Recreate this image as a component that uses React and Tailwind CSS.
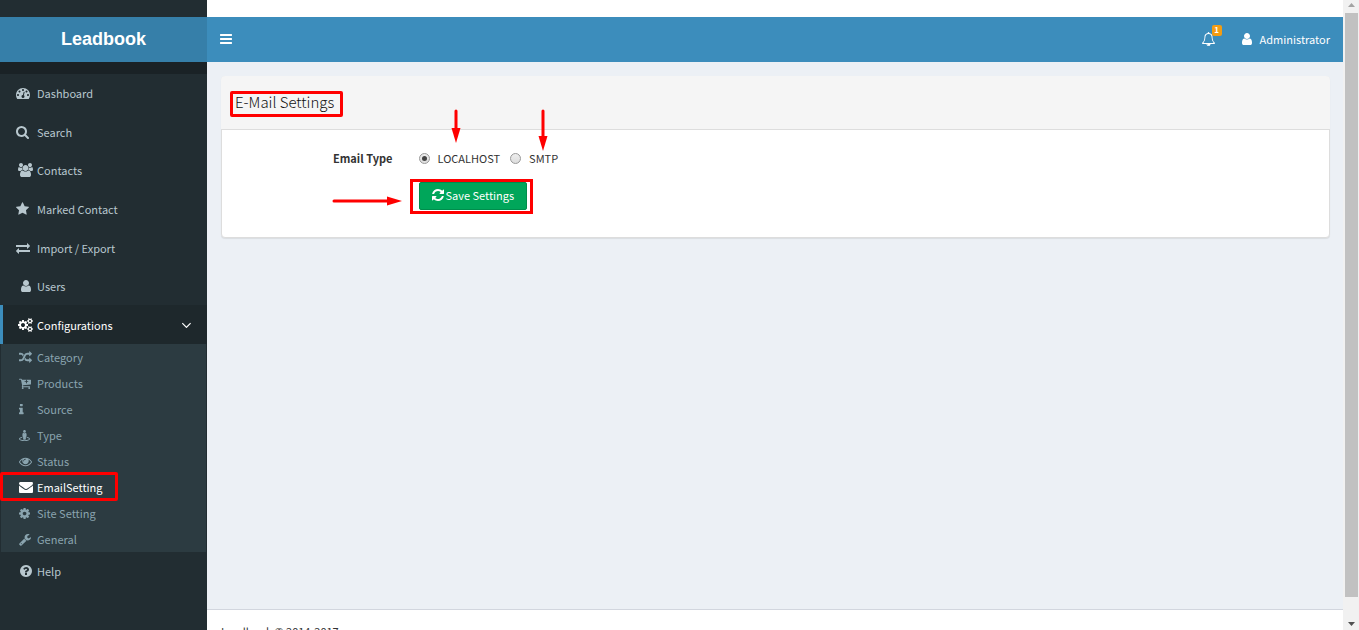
import { useState } from 'react'
import { FaStreetView } from 'react-icons/fa'

// Each icon: [viewBox x, viewBox width, path]. Height is always 1792 units.
const ICONS = {
  bars: [128, 1536, 'M1664 1344v128q0 26-19 45t-45 19h-1408q-26 0-45-19t-19-45v-128q0-26 19-45t45-19h1408q26 0 45 19t19 45zm0-512v128q0 26-19 45t-45 19h-1408q-26 0-45-19t-19-45v-128q0-26 19-45t45-19h1408q26 0 45 19t19 45zm0-512v128q0 26-19 45t-45 19h-1408q-26 0-45-19t-19-45v-128q0-26 19-45t45-19h1408q26 0 45 19t19 45z'],
  dashboard: [0, 1792, 'M384 1152q0-53-37.5-90.5t-90.5-37.5-90.5 37.5-37.5 90.5 37.5 90.5 90.5 37.5 90.5-37.5 37.5-90.5zm192-448q0-53-37.5-90.5t-90.5-37.5-90.5 37.5-37.5 90.5 37.5 90.5 90.5 37.5 90.5-37.5 37.5-90.5zm428 481l101-382q6-26-7.5-48.5t-38.5-29.5-48 6.5-30 39.5l-101 382q-60 5-107 43.5t-63 98.5q-20 77 20 146t117 89 146-20 89-117q16-60-6-117t-72-91zm660-33q0-53-37.5-90.5t-90.5-37.5-90.5 37.5-37.5 90.5 37.5 90.5 90.5 37.5 90.5-37.5 37.5-90.5zm-640-640q0-53-37.5-90.5t-90.5-37.5-90.5 37.5-37.5 90.5 37.5 90.5 90.5 37.5 90.5-37.5 37.5-90.5zm448 192q0-53-37.5-90.5t-90.5-37.5-90.5 37.5-37.5 90.5 37.5 90.5 90.5 37.5 90.5-37.5 37.5-90.5zm320 448q0 261-141 483-19 29-54 29h-1402q-35 0-54-29-141-221-141-483 0-182 71-348t191-286 286-191 348-71 348 71 286 191 191 286 71 348z'],
  search: [64, 1664, 'M1216 832q0-185-131.5-316.5t-316.5-131.5-316.5 131.5-131.5 316.5 131.5 316.5 316.5 131.5 316.5-131.5 131.5-316.5zm512 832q0 52-38 90t-90 38q-54 0-90-38l-343-342q-179 124-399 124-143 0-273.5-55.5t-225-150-150-225-55.5-273.5 55.5-273.5 150-225 225-150 273.5-55.5 273.5 55.5 225 150 150 225 55.5 273.5q0 220-124 399l343 343q37 37 37 90z'],
  users: [0, 1920, 'M593 896q-162 5-265 128h-134q-82 0-138-40.5t-56-118.5q0-353 124-353 6 0 43.5 21t97.5 42.5 119 21.5q67 0 133-23-5 37-5 66 0 139 81 256zm1071 637q0 120-73 189.5t-194 69.5h-874q-121 0-194-69.5t-73-189.5q0-53 3.5-103.5t14-109 26.5-108.5 43-97.5 62-81 85.5-53.5 111.5-20q10 0 43 21.5t73 48 107 48 135 21.5 135-21.5 107-48 73-48 43-21.5q61 0 111.5 20t85.5 53.5 62 81 43 97.5 26.5 108.5 14 109 3.5 103.5zm-1024-1277q0 106-75 181t-181 75-181-75-75-181 75-181 181-75 181 75 75 181zm704 384q0 159-112.5 271.5t-271.5 112.5-271.5-112.5-112.5-271.5 112.5-271.5 271.5-112.5 271.5 112.5 112.5 271.5zm576 225q0 78-56 118.5t-138 40.5h-134q-103-123-265-128 81-117 81-256 0-29-5-66 66 23 133 23 59 0 119-21.5t97.5-42.5 43.5-21q124 0 124 353zm-128-609q0 106-75 181t-181 75-181-75-75-181 75-181 181-75 181 75 75 181z'],
  star: [64, 1664, 'M1728 647q0 22-26 48l-363 354 86 500q1 7 1 20 0 21-10.5 35.5t-30.5 14.5q-19 0-40-12l-449-236-449 236q-22 12-40 12-21 0-31.5-14.5t-10.5-35.5q0-6 2-20l86-500-364-354q-25-27-25-48 0-37 56-46l502-73 225-455q19-41 49-41t49 41l225 455 502 73q56 9 56 46z'],
  exchange: [0, 1792, 'M1792 1184v192q0 13-9.5 22.5t-22.5 9.5h-1376v192q0 13-9.5 22.5t-22.5 9.5q-12 0-24-10l-319-320q-9-9-9-22 0-14 9-23l320-320q9-9 23-9 13 0 22.5 9.5t9.5 22.5v192h1376q13 0 22.5 9.5t9.5 22.5zm0-544q0 14-9 23l-320 320q-9 9-23 9-13 0-22.5-9.5t-9.5-22.5v-192h-1376q-13 0-22.5-9.5t-9.5-22.5v-192q0-13 9.5-22.5t22.5-9.5h1376v-192q0-14 9-23t23-9q12 0 24 10l319 319q9 9 9 23z'],
  user: [256, 1280, 'M1536 1399q0 109-62.5 187t-150.5 78h-854q-88 0-150.5-78t-62.5-187q0-85 8.5-160.5t31.5-152 58.5-131 94-89 134.5-34.5q131 128 313 128t313-128q76 0 134.5 34.5t94 89 58.5 131 31.5 152 8.5 160.5zm-256-887q0 159-112.5 271.5t-271.5 112.5-271.5-112.5-112.5-271.5 112.5-271.5 271.5-112.5 271.5 112.5 112.5 271.5z'],
  cogs: [0, 1920, 'M896 896q0-106-75-181t-181-75-181 75-75 181 75 181 181 75 181-75 75-181zm768 512q0-52-38-90t-90-38-90 38-38 90q0 53 37.5 90.5t90.5 37.5 90.5-37.5 37.5-90.5zm0-1024q0-52-38-90t-90-38-90 38-38 90q0 53 37.5 90.5t90.5 37.5 90.5-37.5 37.5-90.5zm-384 421v185q0 10-7 19.5t-16 10.5l-155 24q-11 35-32 76 34 48 90 115 7 11 7 20 0 12-7 19-23 30-82.5 89.5t-78.5 59.5q-11 0-21-7l-115-90q-37 19-77 31-11 108-23 155-7 24-30 24h-186q-11 0-20-7.5t-10-17.5l-23-153q-34-10-75-31l-118 89q-7 7-20 7-11 0-21-8-144-133-144-160 0-9 7-19 10-14 41-53t47-61q-23-44-35-82l-152-24q-10-1-17-9.5t-7-19.5v-185q0-10 7-19.5t16-10.5l155-24q11-35 32-76-34-48-90-115-7-11-7-20 0-12 7-20 22-30 82-89t79-59q11 0 21 7l115 90q34-18 77-32 11-108 23-154 7-24 30-24h186q11 0 20 7.5t10 17.5l23 153q34 10 75 31l118-89q8-7 20-7 11 0 21 8 144 133 144 160 0 8-7 19-12 16-42 54t-45 60q23 48 34 82l152 23q10 2 17 10.5t7 19.5zm640 533v140q0 16-149 31-12 27-30 52 51 113 51 138 0 4-4 7-122 71-124 71-8 0-46-47t-52-68q-20 2-30 2t-30-2q-14 21-52 68t-46 47q-2 0-124-71-4-3-4-7 0-25 51-138-18-25-30-52-149-15-149-31v-140q0-16 149-31 13-29 30-52-51-113-51-138 0-4 4-7 4-2 35-20t59-34 30-16q8 0 46 46.5t52 67.5q20-2 30-2t30 2q51-71 92-112l6-2q4 0 124 70 4 3 4 7 0 25-51 138 17 23 30 52 149 15 149 31zm0-1024v140q0 16-149 31-12 27-30 52 51 113 51 138 0 4-4 7-122 71-124 71-8 0-46-47t-52-68q-20 2-30 2t-30-2q-14 21-52 68t-46 47q-2 0-124-71-4-3-4-7 0-25 51-138-18-25-30-52-149-15-149-31v-140q0-16 149-31 13-29 30-52-51-113-51-138 0-4 4-7 4-2 35-20t59-34 30-16q8 0 46 46.5t52 67.5q20-2 30-2t30 2q51-71 92-112l6-2q4 0 124 70 4 3 4 7 0 25-51 138 17 23 30 52 149 15 149 31z'],
  angleDown: [397, 998, 'M1395 736q0 13-10 23l-466 466q-10 10-23 10t-23-10l-466-466q-10-10-10-23t10-23l50-50q10-10 23-10t23 10l393 393 393-393q10-10 23-10t23 10l50 50q10 10 10 23z'],
  random: [0, 1792, 'M666 481q-60 92-137 273-22-45-37-72.5t-40.5-63.5-51-56.5-63-35-81.5-14.5h-224q-14 0-23-9t-9-23v-192q0-14 9-23t23-9h224q250 0 410 225zm1126 799q0 14-9 23l-320 320q-9 9-23 9-13 0-22.5-9.5t-9.5-22.5v-192q-32 0-85 .5t-81 1-73-1-71-5-64-10.5-63-18.5-58-28.5-59-40-55-53.5-56-69.5q59-93 136-273 22 45 37 72.5t40.5 63.5 51 56.5 63 35 81.5 14.5h256v-192q0-14 9-23t23-9q12 0 24 10l319 319q9 9 9 23zm0-896q0 14-9 23l-320 320q-9 9-23 9-13 0-22.5-9.5t-9.5-22.5v-192h-256q-48 0-87 15t-69 45-51 61.5-45 77.5q-32 62-78 171-29 66-49.5 111t-54 105-64 100-74 83-90 68.5-106.5 42-128 16.5h-224q-14 0-23-9t-9-23v-192q0-14 9-23t23-9h224q48 0 87-15t69-45 51-61.5 45-77.5q32-62 78-171 29-66 49.5-111t54-105 64-100 74-83 90-68.5 106.5-42 128-16.5h256v-192q0-14 9-23t23-9q12 0 24 10l319 319q9 9 9 23z'],
  cart: [0, 1664, 'M1280 640q0-26-19-45t-45-19h-128v-128q0-26-19-45t-45-19-45 19-19 45v128h-128q-26 0-45 19t-19 45 19 45 45 19h128v128q0 26 19 45t45 19 45-19 19-45v-128h128q26 0 45-19t19-45zm-640 896q0 53-37.5 90.5t-90.5 37.5-90.5-37.5-37.5-90.5 37.5-90.5 90.5-37.5 90.5 37.5 37.5 90.5zm896 0q0 53-37.5 90.5t-90.5 37.5-90.5-37.5-37.5-90.5 37.5-90.5 90.5-37.5 90.5 37.5 37.5 90.5zm128-1088v512q0 24-16 42.5t-41 21.5l-1044 122q1 7 4.5 21.5t6 26.5 2.5 22q0 16-24 64h920q26 0 45 19t19 45-19 45-45 19h-1024q-26 0-45-19t-19-45q0-14 11-39.5t29.5-59.5 20.5-38l-177-823h-204q-26 0-45-19t-19-45 19-45 45-19h256q16 0 28.5 6.5t20 15.5 13 24.5 7.5 26.5 5.5 29.5 4.5 25.5h1201q26 0 45 19t19 45z'],
  info: [576, 640, 'M1216 1344v128q0 26-19 45t-45 19h-512q-26 0-45-19t-19-45v-128q0-26 19-45t45-19h64v-384h-64q-26 0-45-19t-19-45v-128q0-26 19-45t45-19h384q26 0 45 19t19 45v576h64q26 0 45 19t19 45zm-128-1152v192q0 26-19 45t-45 19h-256q-26 0-45-19t-19-45v-192q0-26 19-45t45-19h256q26 0 45 19t19 45z'],
  eye: [0, 1792, 'M1664 960q-152-236-381-353 61 104 61 225 0 185-131.5 316.5t-316.5 131.5-316.5-131.5-131.5-316.5q0-121 61-225-229 117-381 353 133 205 333.5 326.5t434.5 121.5 434.5-121.5 333.5-326.5zm-720-384q0-20-14-34t-34-14q-125 0-214.5 89.5t-89.5 214.5q0 20 14 34t34 14 34-14 14-34q0-86 61-147t147-61q20 0 34-14t14-34zm848 384q0 34-20 69-140 230-376.5 368.5t-499.5 138.5-499.5-139-376.5-368q-20-35-20-69t20-69q140-229 376.5-368t499.5-139 499.5 139 376.5 368q20 35 20 69z'],
  envelope: [0, 1792, 'M1792 710v794q0 66-47 113t-113 47h-1472q-66 0-113-47t-47-113v-794q44 49 101 87 362 246 497 345 57 42 92.5 65.5t94.5 48 110 24.5h2q51 0 110-24.5t94.5-48 92.5-65.5q170-123 498-345 57-39 100-87zm0-294q0 79-49 151t-122 123q-376 261-468 325-10 7-42.5 31t-54 38.5-52 32.5-57.5 27-50 9h-2q-23 0-50-9t-57.5-27-52-32.5-54-38.5-42.5-31q-91-64-262-182.5t-205-142.5q-62-42-117-115.5t-55-136.5q0-78 41.5-130t118.5-52h1472q65 0 112.5 47t47.5 113z'],
  cog: [128, 1536, 'M1152 896q0-106-75-181t-181-75-181 75-75 181 75 181 181 75 181-75 75-181zm512-109v222q0 12-8 23t-20 13l-185 28q-19 54-39 91 35 50 107 138 10 12 10 25t-9 23q-27 37-99 108t-94 71q-12 0-26-9l-138-108q-44 23-91 38-16 136-29 186-7 28-36 28h-222q-14 0-24.5-8.5t-11.5-21.5l-28-184q-49-16-90-37l-141 107q-10 9-25 9-14 0-25-11-126-114-165-168-7-10-7-23 0-12 8-23 15-21 51-66.5t54-70.5q-27-50-41-99l-183-27q-13-2-21-12.5t-8-23.5v-222q0-12 8-23t19-13l186-28q14-46 39-92-40-57-107-138-10-12-10-24 0-10 9-23 26-36 98.5-107.5t94.5-71.5q13 0 26 10l138 107q44-23 91-38 16-136 29-186 7-28 36-28h222q14 0 24.5 8.5t11.5 21.5l28 184q49 16 90 37l142-107q9-9 24-9 13 0 25 10 129 119 165 170 7 8 7 22 0 12-8 23-15 21-51 66.5t-54 70.5q26 50 41 98l183 28q13 2 21 12.5t8 23.5z'],
  wrench: [64, 1664, 'M448 1472q0-26-19-45t-45-19-45 19-19 45 19 45 45 19 45-19 19-45zm644-420l-682 682q-37 37-90 37-52 0-91-37l-106-108q-38-36-38-90 0-53 38-91l681-681q39 98 114.5 173.5t173.5 114.5zm634-435q0 39-23 106-47 134-164.5 217.5t-258.5 83.5q-185 0-316.5-131.5t-131.5-316.5 131.5-316.5 316.5-131.5q58 0 121.5 16.5t107.5 46.5q16 11 16 28t-16 28l-293 169v224l193 107q5-3 79-48.5t135.5-81 70.5-35.5q15 0 23.5 10t8.5 25z'],
  help: [128, 1536, 'M1024 1376v-192q0-14-9-23t-23-9h-192q-14 0-23 9t-9 23v192q0 14 9 23t23 9h192q14 0 23-9t9-23zm256-672q0-88-55.5-163t-138.5-116-170-41q-243 0-371 213-15 24 8 42l132 100q7 6 19 6 16 0 25-12 53-68 86-92 34-24 86-24 48 0 85.5 26t37.5 59q0 38-20 61t-68 45q-63 28-115.5 86.5t-52.5 125.5v36q0 14 9 23t23 9h192q14 0 23-9t9-23q0-19 21.5-49.5t54.5-49.5q32-18 49-28.5t46-35 44.5-48 28-60.5 12.5-81zm384 192q0 209-103 385.5t-279.5 279.5-385.5 103-385.5-103-279.5-279.5-103-385.5 103-385.5 279.5-279.5 385.5-103 385.5 103 279.5 279.5 103 385.5z'],
  bell: [64, 1664, 'M912 1696q0-16-16-16-59 0-101.5-42.5t-42.5-101.5q0-16-16-16t-16 16q0 73 51.5 124.5t124.5 51.5q16 0 16-16zm-666-288h1300q-266-300-266-832 0-51-24-105t-69-103-121.5-80.5-169.5-31.5-169.5 31.5-121.5 80.5-69 103-24 105q0 532-266 832zm1482 0q0 52-38 90t-90 38h-448q0 106-75 181t-181 75-181-75-75-181h-448q-52 0-90-38t-38-90q50-42 91-88t85-119.5 74.5-158.5 50-206 19.5-260q0-152 117-282.5t307-158.5q-8-19-8-39 0-40 28-68t68-28 68 28 28 68q0 20-8 39 190 28 307 158.5t117 282.5q0 139 19.5 260t50 206 74.5 158.5 85 119.5 91 88z'],
  refresh: [128, 1536, 'M1639 1056q0 5-1 7-64 268-268 434.5t-478 166.5q-146 0-282.5-55t-243.5-157l-129 129q-19 19-45 19t-45-19-19-45v-448q0-26 19-45t45-19h448q26 0 45 19t19 45-19 45l-137 137q71 66 161 102t187 36q134 0 250-65t186-179q11-17 53-117 8-23 30-23h192q13 0 22.5 9.5t9.5 22.5zm25-800v448q0 26-19 45t-45 19h-448q-26 0-45-19t-19-45 19-45l138-138q-148-137-349-137-134 0-250 65t-186 179q-11 17-53 117-8 23-30 23h-199q-13 0-22.5-9.5t-9.5-22.5v-7q65-268 270-434.5t480-166.5q146 0 284 55.5t245 156.5l130-129q19-19 45-19t45 19 19 45z'],
}

function Icon({ name, className = 'h-3.5' }) {
  if (name === 'street') return <FaStreetView className="h-[13px] w-[11px]" />
  const [x, w, d] = ICONS[name]
  return (
    <svg viewBox={`${x} 0 ${w} 1792`} className={`${className} w-auto shrink-0`} fill="currentColor" aria-hidden="true">
      <path d={d} />
    </svg>
  )
}

const MENU = [
  { label: 'Dashboard', icon: 'dashboard' },
  { label: 'Search', icon: 'search' },
  { label: 'Contacts', icon: 'users', fixed: true },
  { label: 'Marked Contact', icon: 'star' },
  { label: 'Import / Export', icon: 'exchange' },
  { label: 'Users', icon: 'user', fixed: true },
  { label: 'Configurations', icon: 'cogs', fixed: true, open: true },
]

const SUBMENU = [
  { label: 'Category', icon: 'random' },
  { label: 'Products', icon: 'cart' },
  { label: 'Source', icon: 'info' },
  { label: 'Type', icon: 'street' },
  { label: 'Status', icon: 'eye' },
  { label: 'EmailSetting', icon: 'envelope', active: true },
  { label: 'Site Setting', icon: 'cog' },
  { label: 'General', icon: 'wrench' },
]

function MenuLink({ item }) {
  return (
    <a
      href="#"
      className={`flex h-full items-center border-l-[3px] pl-[13px] pr-4 ${item.open ? 'border-[#3c8dbc] bg-[#1e282c] text-white' : 'border-transparent text-[#b8c7ce]'}`}
    >
      <span className={`flex w-[19px] mr-0.5 ${item.fixed ? 'justify-center' : ''}`}>
        <Icon name={item.icon} />
      </span>
      <span className="flex-1">{item.label}</span>
      {item.open && <Icon name="angleDown" className="h-4" />}
    </a>
  )
}

function Sidebar() {
  return (
    <aside className="w-[207px] shrink-0 bg-[#222d32]">
      <a href="#" className="mt-[17px] flex h-[45px] items-center justify-center bg-[#367fa9] pb-0.5 font-['Liberation_Sans',sans-serif] text-lg font-bold text-white">
        Leadbook
      </a>
      <div className="h-3 bg-[#1a2226]" />
      <nav>
        <ul className="grid h-[270px] auto-rows-fr">
          {MENU.map(item => (
            <li key={item.label}>
              <MenuLink item={item} />
            </li>
          ))}
        </ul>
        <ul className="mx-px bg-[#2c3b41]">
          {SUBMENU.map(item => (
            <li key={item.label} className="relative">
              <a href="#" className={`flex h-[26px] items-center pl-[18px] ${item.active ? 'text-white' : 'text-[#8aa4af]'}`}>
                <span className="flex w-[18px]">
                  <Icon name={item.icon} className={item.active ? 'h-3.5' : 'h-[13px]'} />
                </span>
                {item.label}
              </a>
              {item.active && (
                <span className="pointer-events-none absolute -left-px -top-0.5 h-[29px] w-[118px] rounded-xs border-3 border-[#ff0000]" />
              )}
            </li>
          ))}
        </ul>
        <div className="h-[38px]">
          <MenuLink item={{ label: 'Help', icon: 'help', fixed: true }} />
        </div>
      </nav>
    </aside>
  )
}

function Topbar() {
  return (
    <header className="mt-[17px] flex h-[45px] items-center justify-between bg-[#3c8dbc] px-[13px] pb-0.5 text-white">
      <button type="button" aria-label="Toggle navigation">
        <Icon name="bars" />
      </button>
      <div className="flex items-center gap-[27px]">
        <button type="button" aria-label="Notifications" className="relative">
          <Icon name="bell" />
          <span className="absolute -top-[7px] left-2.5 flex h-[11px] w-2.5 items-center justify-center rounded-xs bg-[#f39c12] text-[8px] leading-none font-bold">
            1
          </span>
        </button>
        <a href="#" className="flex items-center gap-2">
          <Icon name="user" />
          Administrator
        </a>
      </div>
    </header>
  )
}

function Arrow({ className, length, vertical }) {
  const tip = length - 15
  return vertical ? (
    <svg className={`pointer-events-none absolute ${className}`} width="10" height={length} fill="#ff0000" aria-hidden="true">
      <path d={`M5 2V${tip + 2}`} stroke="#ff0000" strokeWidth="3" strokeLinecap="round" />
      <path d={`M0.5 ${tip}H9.5L5 ${length}Z`} />
    </svg>
  ) : (
    <svg className={`pointer-events-none absolute ${className}`} width={length} height="10" fill="#ff0000" aria-hidden="true">
      <path d={`M2 5H${tip + 2}`} stroke="#ff0000" strokeWidth="3" strokeLinecap="round" />
      <path d={`M${tip} 0.5V9.5L${length} 5Z`} />
    </svg>
  )
}

function Radio({ id, label, checked, onChange }) {
  return (
    <label htmlFor={id} className="relative flex items-center gap-2">
      <input
        id={id}
        type="radio"
        name="email-type"
        checked={checked}
        onChange={onChange}
        className="flex size-[11px] appearance-none items-center justify-center rounded-full border border-[#999] bg-linear-to-b from-[#eee] to-[#ddd] checked:before:size-[5px] checked:before:rounded-full checked:before:bg-[#444] checked:before:content-['']"
      />
      {label}
      {id === 'localhost' ? (
        <Arrow vertical length={34} className="bottom-6 left-8" />
      ) : (
        <Arrow vertical length={42} className="bottom-4 left-7" />
      )}
    </label>
  )
}

function SettingsCard() {
  const [type, setType] = useState('localhost')

  return (
    <section className="rounded-sm border border-[#ddd] bg-white shadow-[0_1px_1px_rgba(0,0,0,0.08)]">
      <div className="-mx-px -mt-px h-[54px] rounded-t-sm border-b border-[#ddd] bg-[#f5f5f5] px-[9px] pt-[15px]">
        <h1 className="inline-flex h-[26px] min-w-[113px] items-center rounded-xs border-3 border-[#ff0000] pb-1 pl-0.5 text-[15px] leading-5 font-light text-[#111]">
          E-Mail Settings
        </h1>
      </div>
      <form className="h-[107px] pt-[19px]" onSubmit={e => e.preventDefault()}>
        <div className="flex h-[18px] items-center">
          <div id="type-label" className="w-1/6 pr-3.5 text-right font-bold">Email Type</div>
          <div role="radiogroup" aria-labelledby="type-label" className="flex gap-2.5 pl-3">
            <Radio id="localhost" label="LOCALHOST" checked={type === 'localhost'} onChange={() => setType('localhost')} />
            <Radio id="smtp" label="SMTP" checked={type === 'smtp'} onChange={() => setType('smtp')} />
          </div>
        </div>
        <div className="mt-3 flex">
          <div className="relative w-1/6">
            <Arrow length={70} className="right-[5px] top-[17px]" />
          </div>
          <div className="ml-[3px] flex h-[35px] border-3 border-[#ff0000] pb-px pl-1.5 pr-[3px]">
            <button type="submit" className="flex items-center gap-0.5 rounded-xs border border-[#008d4c] bg-[#00a65a] px-3 pb-0.5 text-white">
              <Icon name="refresh" />
              Save Settings
            </button>
          </div>
        </div>
      </form>
    </section>
  )
}

// Always-visible classic scrollbar for the window
function Scrollbar() {
  return (
    <div className="flex w-4 shrink-0 flex-col items-center bg-[#f1f1f1]" aria-hidden="true">
      <svg className="h-[13px] w-4 shrink-0" fill="#a3a3a3"><path d="M5 7L8.500 3L12 7Z" /></svg>
      <div className="w-[13px] flex-1 bg-[#c1c1c1]" />
      <svg className="h-[33px] w-4 shrink-0" fill="#505050"><path d="M5 25H12L8.500 29Z" /></svg>
    </div>
  )
}

export default function App() {
  return (
    <div className="flex h-screen overflow-hidden bg-white font-['Noto_Sans_CJK_SC',sans-serif] text-[11px] leading-[18px] text-[#333]">
      <Sidebar />
      <div className="flex min-w-0 flex-1 flex-col">
        <Topbar />
        <main className="flex-1 bg-[#ecf0f5] pl-3.5 pr-[13px] pt-3.5">
          <SettingsCard />
        </main>
        <footer className="h-[21px] shrink-0 border-t border-[#d2d6de] px-3.5 pt-3">
          Leadbook © 2014-2017
        </footer>
      </div>
      <Scrollbar />
    </div>
  )
}
